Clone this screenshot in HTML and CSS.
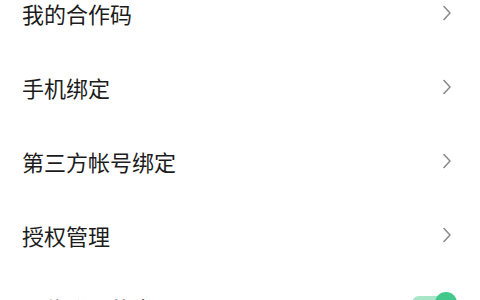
FILE: index.html
```html
<!DOCTYPE html>
<html lang="zh-CN">
<head>
    <meta charset="UTF-8">
    <meta name="viewport" content="width=device-width, initial-scale=1.0">
    <title>账号与安全</title>
    <link rel="stylesheet" href="styles.css">
</head>
<body>
    <div class="settings">
        <!-- Einstellungsliste -->
        <div class="row">
            <span class="label">我的合作码</span>
            <svg class="arrow" viewBox="0 0 10 16"><polyline points="2,1.5 8,8 2,14.5"/></svg>
        </div>
        <div class="row">
            <span class="label">手机绑定</span>
            <svg class="arrow" viewBox="0 0 10 16"><polyline points="2,1.5 8,8 2,14.5"/></svg>
        </div>
        <div class="row">
            <span class="label">第三方帐号绑定</span>
            <svg class="arrow" viewBox="0 0 10 16"><polyline points="2,1.5 8,8 2,14.5"/></svg>
        </div>
        <div class="row">
            <span class="label">授权管理</span>
            <svg class="arrow" viewBox="0 0 10 16"><polyline points="2,1.5 8,8 2,14.5"/></svg>
        </div>
        <div class="row row-switch">
            <span class="label">记住登录状态</span>
            <div class="switch on"></div>
        </div>
    </div>
</body>
</html>
```

FILE: styles.css
```css
* {
    box-sizing: border-box;
    margin: 0;
    padding: 0;
}

body {
    font-family: "Noto Sans CJK SC", "Noto Sans", sans-serif;
    background-color: #fff;
    color: #1c1c1c;
    overflow: hidden;
}

.settings {
    margin-top: -24px; /* Liste ist leicht nach oben gescrollt */
}

.row {
    height: 74px;
    display: flex;
    align-items: center;
    justify-content: space-between;
    padding: 0 28px 0 22px;
}

.label {
    font-size: 22px;
    line-height: 1;
    color: #1c1c1c;
}

.arrow {
    width: 10px;
    height: 16px;
    fill: none;
    stroke: #8c8c8c;
    stroke-width: 1.6;
    stroke-linecap: round;
    stroke-linejoin: round;
}

.row-switch {
    margin-top: -1px;
    padding-right: 24px;
}

.switch {
    position: relative;
    width: 44px;
    height: 14px;
    margin-bottom: 10px; /* Schalter sitzt etwas höher als der Text */
    border-radius: 7px;
    background-color: #a8e6c8;
}

.switch::after {
    content: "";
    position: absolute;
    right: -1px;
    top: -4px;
    width: 22px;
    height: 22px;
    border-radius: 50%;
    background-color: #41c88a;
}
```
